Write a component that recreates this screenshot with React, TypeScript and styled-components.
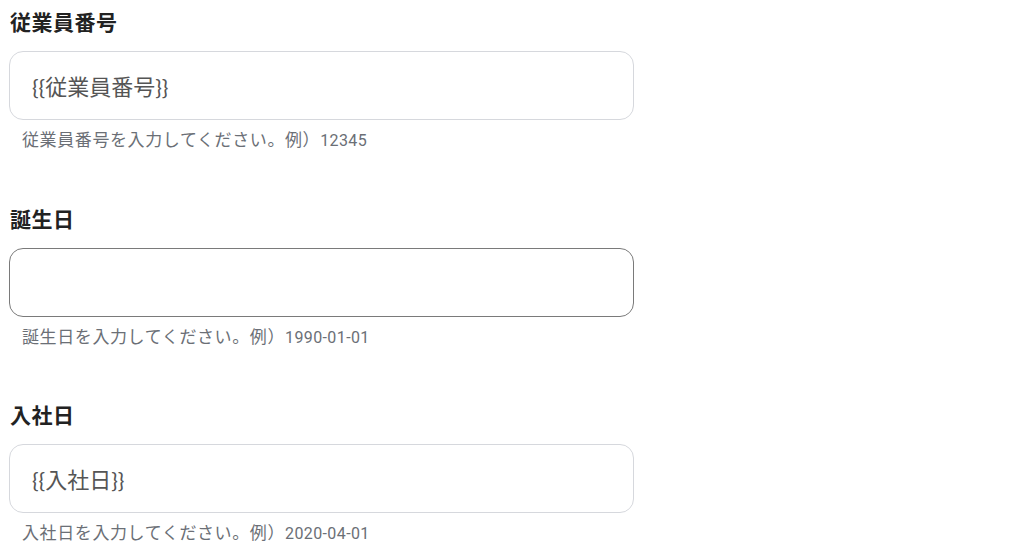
import React from "react";
import styled, { createGlobalStyle } from "styled-components";

const Global = createGlobalStyle`
  html, body { margin: 0; padding: 0; background: #ffffff; }
  body { font-family: "Noto Sans", "Noto Sans CJK JP", sans-serif; }
`;

const Form = styled.div`
  display: flex;
  flex-direction: column;
  gap: 50.5px;
  padding: 6px 9px 0 9px;
  width: 625px;
`;

const Field = styled.div`
  display: flex;
  flex-direction: column;
`;

const Label = styled.label`
  font-family: "Noto Sans CJK JP", sans-serif;
  font-size: 21px;
  font-weight: 700;
  line-height: 30px;
  color: #222222;
  padding-left: 1px;
  letter-spacing: 0.5px;
  margin-bottom: 15px;
`;

const Input = styled.input<{ $active?: boolean }>`
  box-sizing: border-box;
  width: 625px;
  height: 69px;
  border: 1px solid ${(p) => (p.$active ? "#7a7a7a" : "#d6d8dd")};
  border-radius: 14px;
  padding: 0 22px 2px;
  font-family: "Lato", "Noto Sans CJK JP", sans-serif;
  font-size: 22px;
  color: #555555;
  background: #ffffff;
  outline: none;
`;

const Help = styled.div`
  font-family: "Roboto", "Noto Sans CJK JP", sans-serif;
  font-size: 17px;
  line-height: 22px;
  color: #6b6f76;
  padding-left: 13px;
  margin-top: 9px;
  letter-spacing: 0.6px;
`;

const Sample = styled.span`
  font-size: 16px;
  line-height: 22px;
  letter-spacing: 0.4px;
`;

const fields = [
  { label: "従業員番号", value: "{{従業員番号}}", help: "従業員番号を入力してください。例）", sample: "12345" },
  { label: "誕生日", value: "", help: "誕生日を入力してください。例）", sample: "1990-01-01", active: true },
  { label: "入社日", value: "{{入社日}}", help: "入社日を入力してください。例）", sample: "2020-04-01" },
];

export default function App() {
  return (
    <>
      <Global />
      <Form>
        {fields.map((f) => (
          <Field key={f.label}>
            <Label>{f.label}</Label>
            <Input $active={f.active} defaultValue={f.value} />
            <Help>
              {f.help}
              <Sample>{f.sample}</Sample>
            </Help>
          </Field>
        ))}
      </Form>
    </>
  );
}
